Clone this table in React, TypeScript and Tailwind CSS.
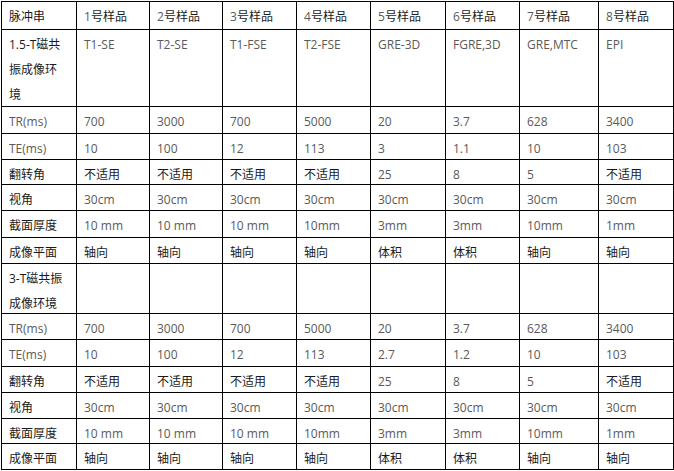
import React from "react";

const samples = ["1号样品", "2号样品", "3号样品", "4号样品", "5号样品", "6号样品", "7号样品", "8号样品"];

const block = (env: React.ReactNode, seq: string[], te: string[]) => [
    { label: env, cells: seq },
    { label: "TR(ms)", cells: ["700", "3000", "700", "5000", "20", "3.7", "628", "3400"] },
    { label: "TE(ms)", cells: te },
    { label: "翻转角", cells: ["不适用", "不适用", "不适用", "不适用", "25", "8", "5", "不适用"] },
    { label: "视角", cells: ["30cm", "30cm", "30cm", "30cm", "30cm", "30cm", "30cm", "30cm"] },
    { label: "截面厚度", cells: ["10 mm", "10 mm", "10 mm", "10mm", "3mm", "3mm", "10mm", "1mm"] },
    { label: "成像平面", cells: ["轴向", "轴向", "轴向", "轴向", "体积", "体积", "轴向", "轴向"] },
];

const rows = [
    ...block(
        <>1.5-T磁共<br />振成像环<br />境</>,
        ["T1-SE", "T2-SE", "T1-FSE", "T2-FSE", "GRE-3D", "FGRE,3D", "GRE,MTC", "EPI"],
        ["10", "100", "12", "113", "3", "1.1", "10", "103"]
    ),
    ...block(
        <>3-T磁共振<br />成像环境</>,
        ["", "", "", "", "", "", "", ""],
        ["10", "100", "12", "113", "2.7", "1.2", "10", "103"]
    ),
];

// latin-only values read lighter in the source, CJK ones near black
const isLatin = (s: string) => !/[\u4e00-\u9fff]/.test(s);

function Cell({ children, latin }: { children: React.ReactNode; latin?: boolean }) {
    return (
        <div
            className={`border-r border-b border-black pl-[7px] pt-[2px] text-[12px] leading-[25px] ${
                latin ? "text-[#5a5a5a]" : "text-[#1a1a1a]"
            }`}
        >
            {children}
        </div>
    );
}

export default function App() {
    return (
        <div className="h-[471px] w-[674px] bg-white pl-px pt-px font-['Open_Sans','Noto_Sans_CJK_SC',sans-serif]">
            <div className="grid w-[673px] grid-cols-[75px_73px_73px_74px_74px_75px_74px_79px_75px] grid-rows-[28px_77px_27px_26px_25px_26px_27px_26px_50px_26px_27px_26px_26px_25px_26px] border-l border-t border-black">
                <Cell>脉冲串</Cell>
                {samples.map((s) => (
                    <Cell key={s}>
                        <span className="text-[#5a5a5a]">{s[0]}</span>
                        {s.slice(1)}
                    </Cell>
                ))}

                {rows.map((row, i) => (
                    <React.Fragment key={i}>
                        <Cell latin={typeof row.label === "string" && isLatin(row.label)}>{row.label}</Cell>
                        {row.cells.map((c, j) => (
                            <Cell key={j} latin={isLatin(c)}>
                                {c}
                            </Cell>
                        ))}
                    </React.Fragment>
                ))}
            </div>
        </div>
    );
}
